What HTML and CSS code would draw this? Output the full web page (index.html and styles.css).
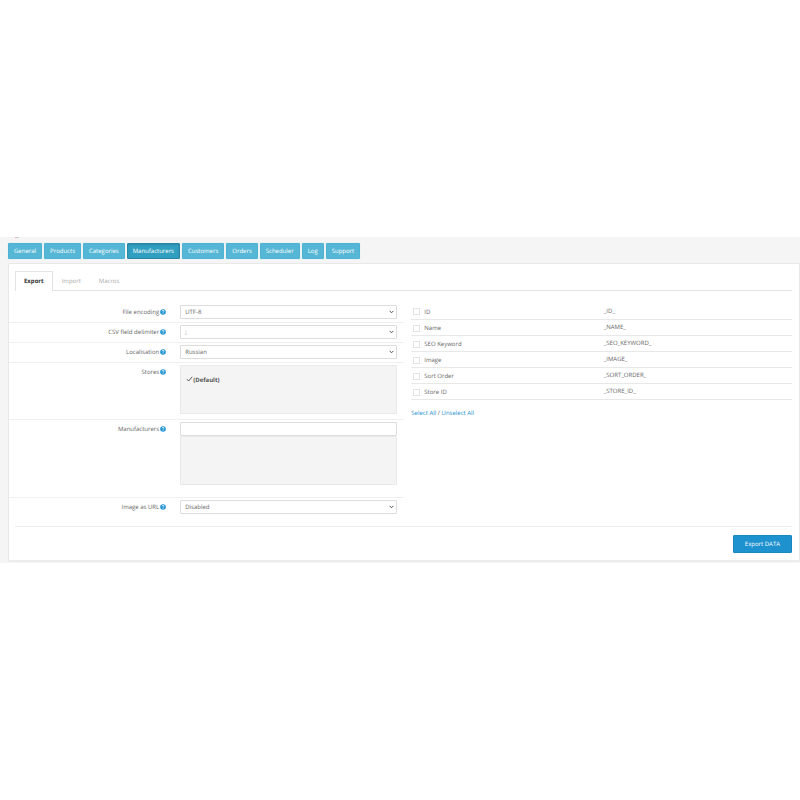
FILE: index.html
```html
<!DOCTYPE html>
<html lang="en">
<head>
  <meta charset="utf-8">
  <title>Export Manufacturers</title>
  <link rel="stylesheet" href="styles.css">
</head>
<body>

  <!-- question mark icon used next to the labels -->
  <svg class="sprite" aria-hidden="true">
    <symbol id="help" viewBox="0 0 12 12">
      <circle cx="6" cy="6" r="5.6" fill="#1e91cf"/>
      <path d="M4 4.6C4 3.2 4.9 2.6 6 2.6s2.1.7 2.1 1.8c0 1.4-2 1.4-2 2.9" fill="none" stroke="#fff" stroke-width="1.6"/>
      <rect x="5.2" y="8.3" width="1.7" height="1.5" fill="#fff"/>
    </symbol>
  </svg>

  <div class="page">
    <div class="logo"><span class="logo-red"></span><span class="logo-blue"></span></div>

    <nav class="menu">
      <button type="button">General</button>
      <button type="button">Products</button>
      <button type="button">Categories</button>
      <button type="button" class="active">Manufacturers</button>
      <button type="button">Customers</button>
      <button type="button">Orders</button>
      <button type="button">Scheduler</button>
      <button type="button">Log</button>
      <button type="button">Support</button>
    </nav>

    <form class="panel">
      <div class="tabs">
        <a href="#export" class="active">Export</a>
        <a href="#import">Import</a>
        <a href="#macros">Macros</a>
      </div>

      <div class="columns">
        <div class="settings">
          <div class="row">
            <label for="encoding">File encoding <svg class="help"><use href="#help"/></svg></label>
            <select id="encoding"><option>UTF-8</option></select>
          </div>
          <div class="row">
            <label for="delimiter">CSV field delimiter <svg class="help"><use href="#help"/></svg></label>
            <select id="delimiter"><option>;</option></select>
          </div>
          <div class="row">
            <label for="language">Localisation <svg class="help"><use href="#help"/></svg></label>
            <select id="language"><option>Russian</option></select>
          </div>
          <div class="row row-stores">
            <label for="store">Stores <svg class="help"><use href="#help"/></svg></label>
            <div class="well">
              <input type="checkbox" id="store" class="store-check" checked>
              <label for="store" class="store-name">(Default)</label>
            </div>
          </div>
          <div class="row row-manufacturers">
            <label for="manufacturer">Manufacturers <svg class="help"><use href="#help"/></svg></label>
            <div>
              <input type="text" id="manufacturer">
              <div class="well"></div>
            </div>
          </div>
          <div class="row">
            <label for="imageurl">Image as URL <svg class="help"><use href="#help"/></svg></label>
            <select id="imageurl"><option>Disabled</option></select>
          </div>
        </div>

        <div class="fields">
          <table>
            <tr>
              <td><input type="checkbox" id="f-id"><label for="f-id">ID</label></td>
              <td>_ID_</td>
            </tr>
            <tr>
              <td><input type="checkbox" id="f-name"><label for="f-name">Name</label></td>
              <td>_NAME_</td>
            </tr>
            <tr>
              <td><input type="checkbox" id="f-seo"><label for="f-seo">SEO Keyword</label></td>
              <td>_SEO_KEYWORD_</td>
            </tr>
            <tr>
              <td><input type="checkbox" id="f-image"><label for="f-image">Image</label></td>
              <td>_IMAGE_</td>
            </tr>
            <tr>
              <td><input type="checkbox" id="f-sort"><label for="f-sort">Sort Order</label></td>
              <td>_SORT_ORDER_</td>
            </tr>
            <tr>
              <td><input type="checkbox" id="f-store"><label for="f-store">Store ID</label></td>
              <td>_STORE_ID_</td>
            </tr>
          </table>
          <p class="select-links"><a href="#all">Select All</a> / <a href="#none">Unselect All</a></p>
        </div>
      </div>

      <div class="actions">
        <button type="submit">Export DATA</button>
      </div>
    </form>
  </div>

</body>
</html>
```
FILE: styles.css
```css
* {
  box-sizing: border-box;
}

body {
  margin: 0;
  min-height: 100vh;
  display: flex;
  align-items: center;
  background-color: #fff;
  font-family: "Open Sans", sans-serif;
  font-size: 6px;
  line-height: 8px;
  text-rendering: geometricPrecision;
  color: #666;
}

button, input, select {
  font: inherit;
  text-rendering: inherit;
  margin: 0;
}

a {
  color: #1e91cf;
  text-decoration: none;
}

.sprite {
  position: absolute;
  width: 0;
  height: 0;
}

.page {
  position: relative;
  width: 100%;
  padding: 6px 0 1px 8px;
  background-color: #f5f5f5;
}

/* bottom edge of the logo */
.logo {
  position: absolute;
  top: 0;
  left: 15px;
  display: flex;
}

.logo span {
  width: 2px;
  height: 1px;
}

.logo-red {
  background-color: #f4b5ad;
}

.logo-blue {
  background-color: #b5cbe8;
}

.menu {
  display: flex;
  gap: 2px;
  margin-bottom: 4px;
}

.menu button {
  height: 16px;
  padding: 0 5px;
  border: 1px solid #4eb2d2;
  border-radius: 1px;
  background-color: #55b7d5;
  box-shadow: 0 0 1px #9fd3e4;
  color: #fff;
}

.menu button.active {
  border-color: #2a87a4;
  background-color: #319fc0;
  box-shadow: inset 0 1px 2px #2a87a4;
}

.panel {
  padding: 7px 7px 7px 6px;
  border: 1px solid #e8e8e8;
  border-bottom: 2px solid #ececec;
  border-radius: 2px;
  background-color: #fff;
}

.tabs {
  display: flex;
  height: 20px;
  border-bottom: 1px solid #e4e4e4;
}

.tabs a {
  height: 20px;
  padding: 5px 8px;
  border: 1px solid transparent;
  border-bottom: 0;
  color: #aaa;
}

.tabs a.active {
  border-color: #e4e4e4;
  border-radius: 1px 1px 0 0;
  background-color: #fff;
  color: #333;
  font-weight: bold;
}

.columns {
  display: flex;
  gap: 7px;
  padding: 12px 0 9px;
}

.settings {
  flex: 1;
  margin-left: -6px;
}

.row {
  display: grid;
  grid-template-columns: 41% 1fr;
  column-gap: 12px;
  align-items: start;
  padding: 2px 7px 3px 0;
}

.row + .row {
  border-top: 1px solid #f0f0f0;
}

.row > label {
  padding-top: 3px;
  display: flex;
  justify-content: flex-end;
  align-items: center;
  gap: 1px;
  margin-right: 2px;
}

.help {
  width: 6px;
  height: 6px;
}

select, input[type="text"] {
  display: block;
  width: 100%;
  height: 14px;
  padding: 0 4px;
  border: 1px solid #ddd;
  border-radius: 1px;
  background-color: #fff;
  color: #666;
}

select {
  appearance: none;
  background-image: url("data:image/svg+xml,%3Csvg xmlns='http://www.w3.org/2000/svg' viewBox='0 0 5 4'%3E%3Cpath d='M.6.8 2.5 2.8 4.4.8' fill='none' stroke='%23555'/%3E%3C/svg%3E");
  background-repeat: no-repeat;
  background-position: right 2px center;
  background-size: 5px 4px;
}

.well {
  height: 49px;
  padding: 10px 5px;
  border: 1px solid #e9e9e9;
  border-radius: 1px;
  background-color: #f4f4f4;
}

.row-stores {
  padding-bottom: 5px;
}

.row-stores .well {
  display: flex;
  align-items: flex-start;
}

.row-manufacturers {
  padding-bottom: 12px;
}

input[type="checkbox"] {
  appearance: none;
  width: 7px;
  height: 7px;
  border: 1px solid #e4e4e4;
  background-color: #fff;
}

input.store-check {
  height: 6px;
  border: 0;
  background: url("data:image/svg+xml,%3Csvg xmlns='http://www.w3.org/2000/svg' viewBox='0 0 7 6'%3E%3Cpath d='M1 3.2 2.6 5 6.2.8' fill='none' stroke='%23444' stroke-width='.9'/%3E%3C/svg%3E") no-repeat;
}

.store-name {
  font-weight: bold;
  color: #555;
}

.fields {
  flex: 0 0 49%;
}

table {
  width: 100%;
  border-collapse: collapse;
  table-layout: fixed;
}

td {
  height: 16px;
  padding: 0 2px;
  border-bottom: 1px solid #e8e8e8;
}

td:first-child {
  padding-top: 2px;
}

td input {
  vertical-align: middle;
}

td label {
  padding-left: 4px;
  vertical-align: middle;
}

.select-links {
  margin: 9px 0 0;
}

.actions {
  display: flex;
  justify-content: flex-end;
  padding-top: 8px;
  border-top: 1px solid #eee;
}

.actions button {
  height: 18px;
  padding: 0 11px;
  border: 1px solid #1b87c1;
  border-radius: 1px;
  background-color: #1e91cf;
  color: #fff;
}
```
